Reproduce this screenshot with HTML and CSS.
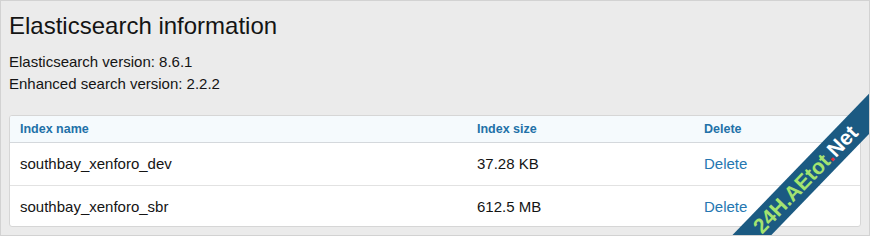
FILE: index.html
```html
<!DOCTYPE html>
<html>
<head>
<meta charset="utf-8">
<link rel="stylesheet" href="styles.css">
</head>
<body>
<div class="frame">
  <h1 class="title">Elasticsearch information</h1>
  <div class="info">
    <div>Elasticsearch version: 8.6.1</div>
    <div>Enhanced search version: 2.2.2</div>
  </div>
  <div class="tbl">
    <div class="row head">
      <div class="cell">Index name</div>
      <div class="cell">Index size</div>
      <div class="cell">Delete</div>
    </div>
    <div class="row">
      <div class="cell">southbay_xenforo_dev</div>
      <div class="cell">37.28 KB</div>
      <div class="cell"><a class="link" href="#">Delete</a></div>
    </div>
    <div class="row last">
      <div class="cell">southbay_xenforo_sbr</div>
      <div class="cell">612.5 MB</div>
      <div class="cell"><a class="link" href="#">Delete</a></div>
    </div>
  </div>
  <div class="ribbon"><span class="g">24H.AEtot</span><span class="r">.</span><span class="w">Net</span></div>
</div>
</body>
</html>
```

FILE: styles.css
```css
html, body {
  margin: 0;
  padding: 0;
}
body {
  width: 870px;
  height: 236px;
  overflow: hidden;
  font-family: "Liberation Sans", Arial, sans-serif;
  color: #141414;
}
.frame {
  position: relative;
  box-sizing: border-box;
  width: 870px;
  height: 236px;
  border: 1px solid #d2d2d2;
  background: #ebebeb;
  padding: 8px 8px 8px 8px;
  overflow: hidden;
}
.title {
  margin: 2px 0 0 0;
  font-size: 24px;
  line-height: 30px;
  font-weight: normal;
  color: #141414;
}
.info {
  margin-top: 10px;
  font-size: 15px;
  line-height: 22px;
}
.tbl {
  margin-top: 20px;
  background: #fff;
  border: 1px solid #d6d6d6;
  border-radius: 3px;
  overflow: hidden;
}
.row {
  display: grid;
  grid-template-columns: 457px 227px 1fr;
  border-bottom: 1px solid #e2e2e2;
}
.row.last {
  border-bottom: none;
}
.cell {
  padding: 11px 10px 11px 10px;
  font-size: 15px;
  line-height: 20px;
}
.row.last .cell {
  padding-bottom: 9px;
}
.head {
  background: #f5fafd;
  border-bottom: 1px solid #d4d8dc;
}
.head .cell {
  padding: 7px 10px 6px 10px;
  font-size: 12.5px;
  line-height: 13px;
  font-weight: bold;
  color: #2271a8;
}
.link {
  color: #2577b1;
  text-decoration: none;
}
.ribbon {
  position: absolute;
  left: 646px;
  top: 163px;
  width: 320px;
  height: 28px;
  box-sizing: border-box;
  padding-right: 4px;
  background: #1b5a82;
  transform: rotate(-46deg);
  text-align: center;
  font-family: "Liberation Sans", Arial, sans-serif;
  font-weight: bold;
  font-size: 21px;
  line-height: 28px;
  white-space: nowrap;
}
.ribbon .g { color: #a4e370; }
.ribbon .r { color: #e2303a; }
.ribbon .w { color: #ffffff; }
```
